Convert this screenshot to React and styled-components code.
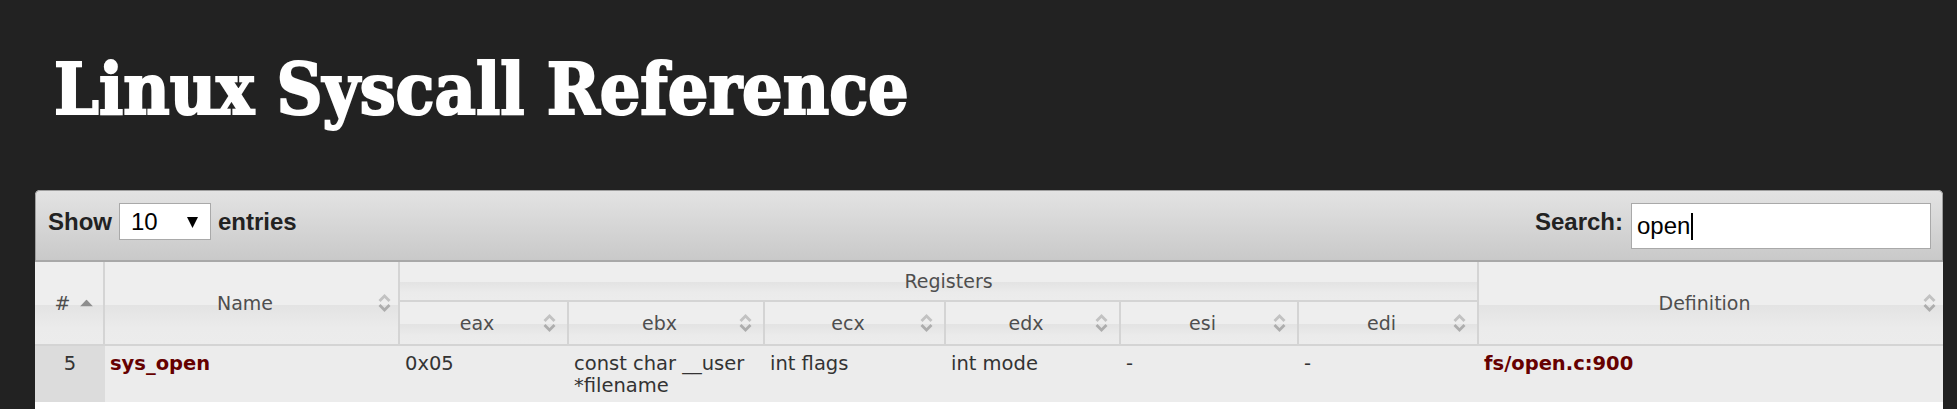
import React from "react";
import styled, { createGlobalStyle } from "styled-components";

const Global = createGlobalStyle`
  * { box-sizing: border-box; }
  html, body { margin: 0; padding: 0; background: #222222; }
  body { font-family: "DejaVu Sans", Verdana, sans-serif; }
`;

const Page = styled.div`
  display: flex;
  flex-direction: column;
`;

const Header = styled.header`
  padding: 54px 0 65px 54px;
`;

const Title = styled.h1`
  margin: 0;
  font-family: "DejaVu Serif Condensed", "DejaVu Serif", serif;
  font-stretch: condensed;
  font-weight: 700;
  font-size: 71px;
  line-height: 71px;
  color: #ffffff;
  white-space: nowrap;
  -webkit-text-stroke: 2px #ffffff;
  text-shadow: 0 0 2px rgba(255, 255, 255, 0.35);
`;

const Panel = styled.section`
  margin: 0 14px 0 35px;
  background: #ffffff;
  border-radius: 5px 5px 0 0;
`;

const Toolbar = styled.div`
  display: flex;
  justify-content: space-between;
  align-items: flex-start;
  height: 72px;
  padding: 12px 11px 0 12px;
  border: 1px solid #9e9e9e;
  border-bottom: 2px solid #a8a8a8;
  border-radius: 5px 5px 0 0;
  background: linear-gradient(to bottom, #e3e3e3 0%, #d6d6d6 50%, #c9c9c9 100%);
  font-family: "Liberation Sans", Arial, sans-serif;
  font-weight: 700;
  font-size: 24px;
  color: #222222;
`;

const Group = styled.div`
  display: flex;
  align-items: flex-start;
  gap: ${(p) => p.$gap || 8}px;
`;

const Label = styled.span`
  line-height: 37px;
`;

const FakeSelect = styled.div`
  width: 92px;
  height: 37px;
  display: flex;
  align-items: center;
  justify-content: space-between;
  padding: 0 12px 0 11px;
  background: #ffffff;
  border: 1px solid #a9a9a9;
  font-weight: 400;
  font-size: 24px;
  color: #000000;
`;

const SearchBox = styled.div`
  width: 300px;
  height: 46px;
  display: flex;
  align-items: center;
  padding: 0 5px;
  background: #ffffff;
  border: 1px solid #a9a9a9;
  font-weight: 400;
  font-size: 24px;
  color: #000000;
`;

const Caret = styled.span`
  display: inline-block;
  width: 2px;
  height: 27px;
  background: #000000;
  margin-left: 1px;
`;

const Table = styled.table`
  width: 100%;
  table-layout: fixed;
  border-collapse: separate;
  border-spacing: 0;
  font-size: 19px;
`;

const Th = styled.th`
  position: relative;
  height: ${(p) => p.$h}px;
  padding: 0 ${(p) => (p.$plain ? 0 : 18)}px 0 ${(p) => (p.$plain ? 20 : 5)}px;
  font-weight: 400;
  color: #4e4e4e;
  text-align: center;
  vertical-align: middle;
  border-bottom: 2px solid #d4d4d4;
  border-right: ${(p) => (p.$last ? "none" : "2px solid #d4d4d4")};
  background: linear-gradient(
    to bottom,
    #eeeeee 0%,
    #eeeeee 52%,
    #e3e3e3 53%,
    #ebebeb 80%,
    #ececec 100%
  );
  white-space: nowrap;
`;

const SortSlot = styled.span`
  position: absolute;
  right: ${(p) => p.$right}px;
  top: 50%;
  transform: translateY(-50%);
  display: flex;
`;

const Td = styled.td`
  height: 56px;
  padding: 7px 5px 5px;
  vertical-align: top;
  line-height: 22px;
  font-size: 19.5px;
  color: #333333;
  background: ${(p) => (p.$sorted ? "#dcdcdc" : "#ececec")};
  text-align: ${(p) => (p.$center ? "center" : "left")};
`;

const Link = styled.a`
  color: #660000;
  font-weight: 700;
  text-decoration: none;
`;

const Below = styled.div`
  height: 40px;
  background: #ffffff;
`;

const SortBoth = () => (
  <svg width="15" height="22" viewBox="0 0 15 22">
    <polyline points="2.5,9 7.5,4 12.5,9" fill="none" stroke="#c2c2c2" strokeWidth="2.8" />
    <polyline points="2.5,13 7.5,18 12.5,13" fill="none" stroke="#adadad" strokeWidth="2.8" />
  </svg>
);

const SortAsc = () => (
  <svg width="13" height="7" viewBox="0 0 13 7">
    <polygon points="0,7 6.5,0 13,7" fill="#8e8e8e" />
  </svg>
);

const SelectArrow = () => (
  <svg width="11" height="12" viewBox="0 0 11 12">
    <polygon points="0,1 11,1 5.5,12" fill="#000" />
  </svg>
);

const widths = [70, 295, 169, 196, 181, 175, 178, 180, null];
const regs = ["eax", "ebx", "ecx", "edx", "esi", "edi"];

const row = {
  num: "5",
  name: "sys_open",
  vals: ["0x05", "const char __user *filename", "int flags", "int mode", "-", "-"],
  def: "fs/open.c:900",
};

export default function App() {
  return (
    <Page>
      <Global />
      <Header>
        <Title>Linux Syscall Reference</Title>
      </Header>
      <Panel>
        <Toolbar>
          <Group $gap={7}>
            <Label>Show</Label>
            <FakeSelect>
              <span>10</span>
              <SelectArrow />
            </FakeSelect>
            <Label>entries</Label>
          </Group>
          <Group $gap={8}>
            <Label>Search:</Label>
            <SearchBox>
              <span>open</span>
              <Caret />
            </SearchBox>
          </Group>
        </Toolbar>
        <Table>
          <colgroup>
            {widths.map((w, i) => (
              <col key={i} style={w ? { width: w } : undefined} />
            ))}
          </colgroup>
          <thead>
            <tr>
              <Th rowSpan={2} $h={40}>
                #
                <SortSlot $right={10}>
                  <SortAsc />
                </SortSlot>
              </Th>
              <Th rowSpan={2} $h={40}>
                Name
                <SortSlot $right={6}>
                  <SortBoth />
                </SortSlot>
              </Th>
              <Th colSpan={6} $h={40} $plain>
                Registers
              </Th>
              <Th rowSpan={2} $h={40} $last>
                Definition
                <SortSlot $right={6}>
                  <SortBoth />
                </SortSlot>
              </Th>
            </tr>
            <tr>
              {regs.map((r) => (
                <Th key={r} $h={44}>
                  {r}
                  <SortSlot $right={10}>
                    <SortBoth />
                  </SortSlot>
                </Th>
              ))}
            </tr>
          </thead>
          <tbody>
            <tr>
              <Td $sorted $center>{row.num}</Td>
              <Td>
                <Link href="#">{row.name}</Link>
              </Td>
              {row.vals.map((v, i) => (
                <Td key={i}>{v}</Td>
              ))}
              <Td>
                <Link href="#">{row.def}</Link>
              </Td>
            </tr>
          </tbody>
        </Table>
        <Below />
      </Panel>
    </Page>
  );
}
